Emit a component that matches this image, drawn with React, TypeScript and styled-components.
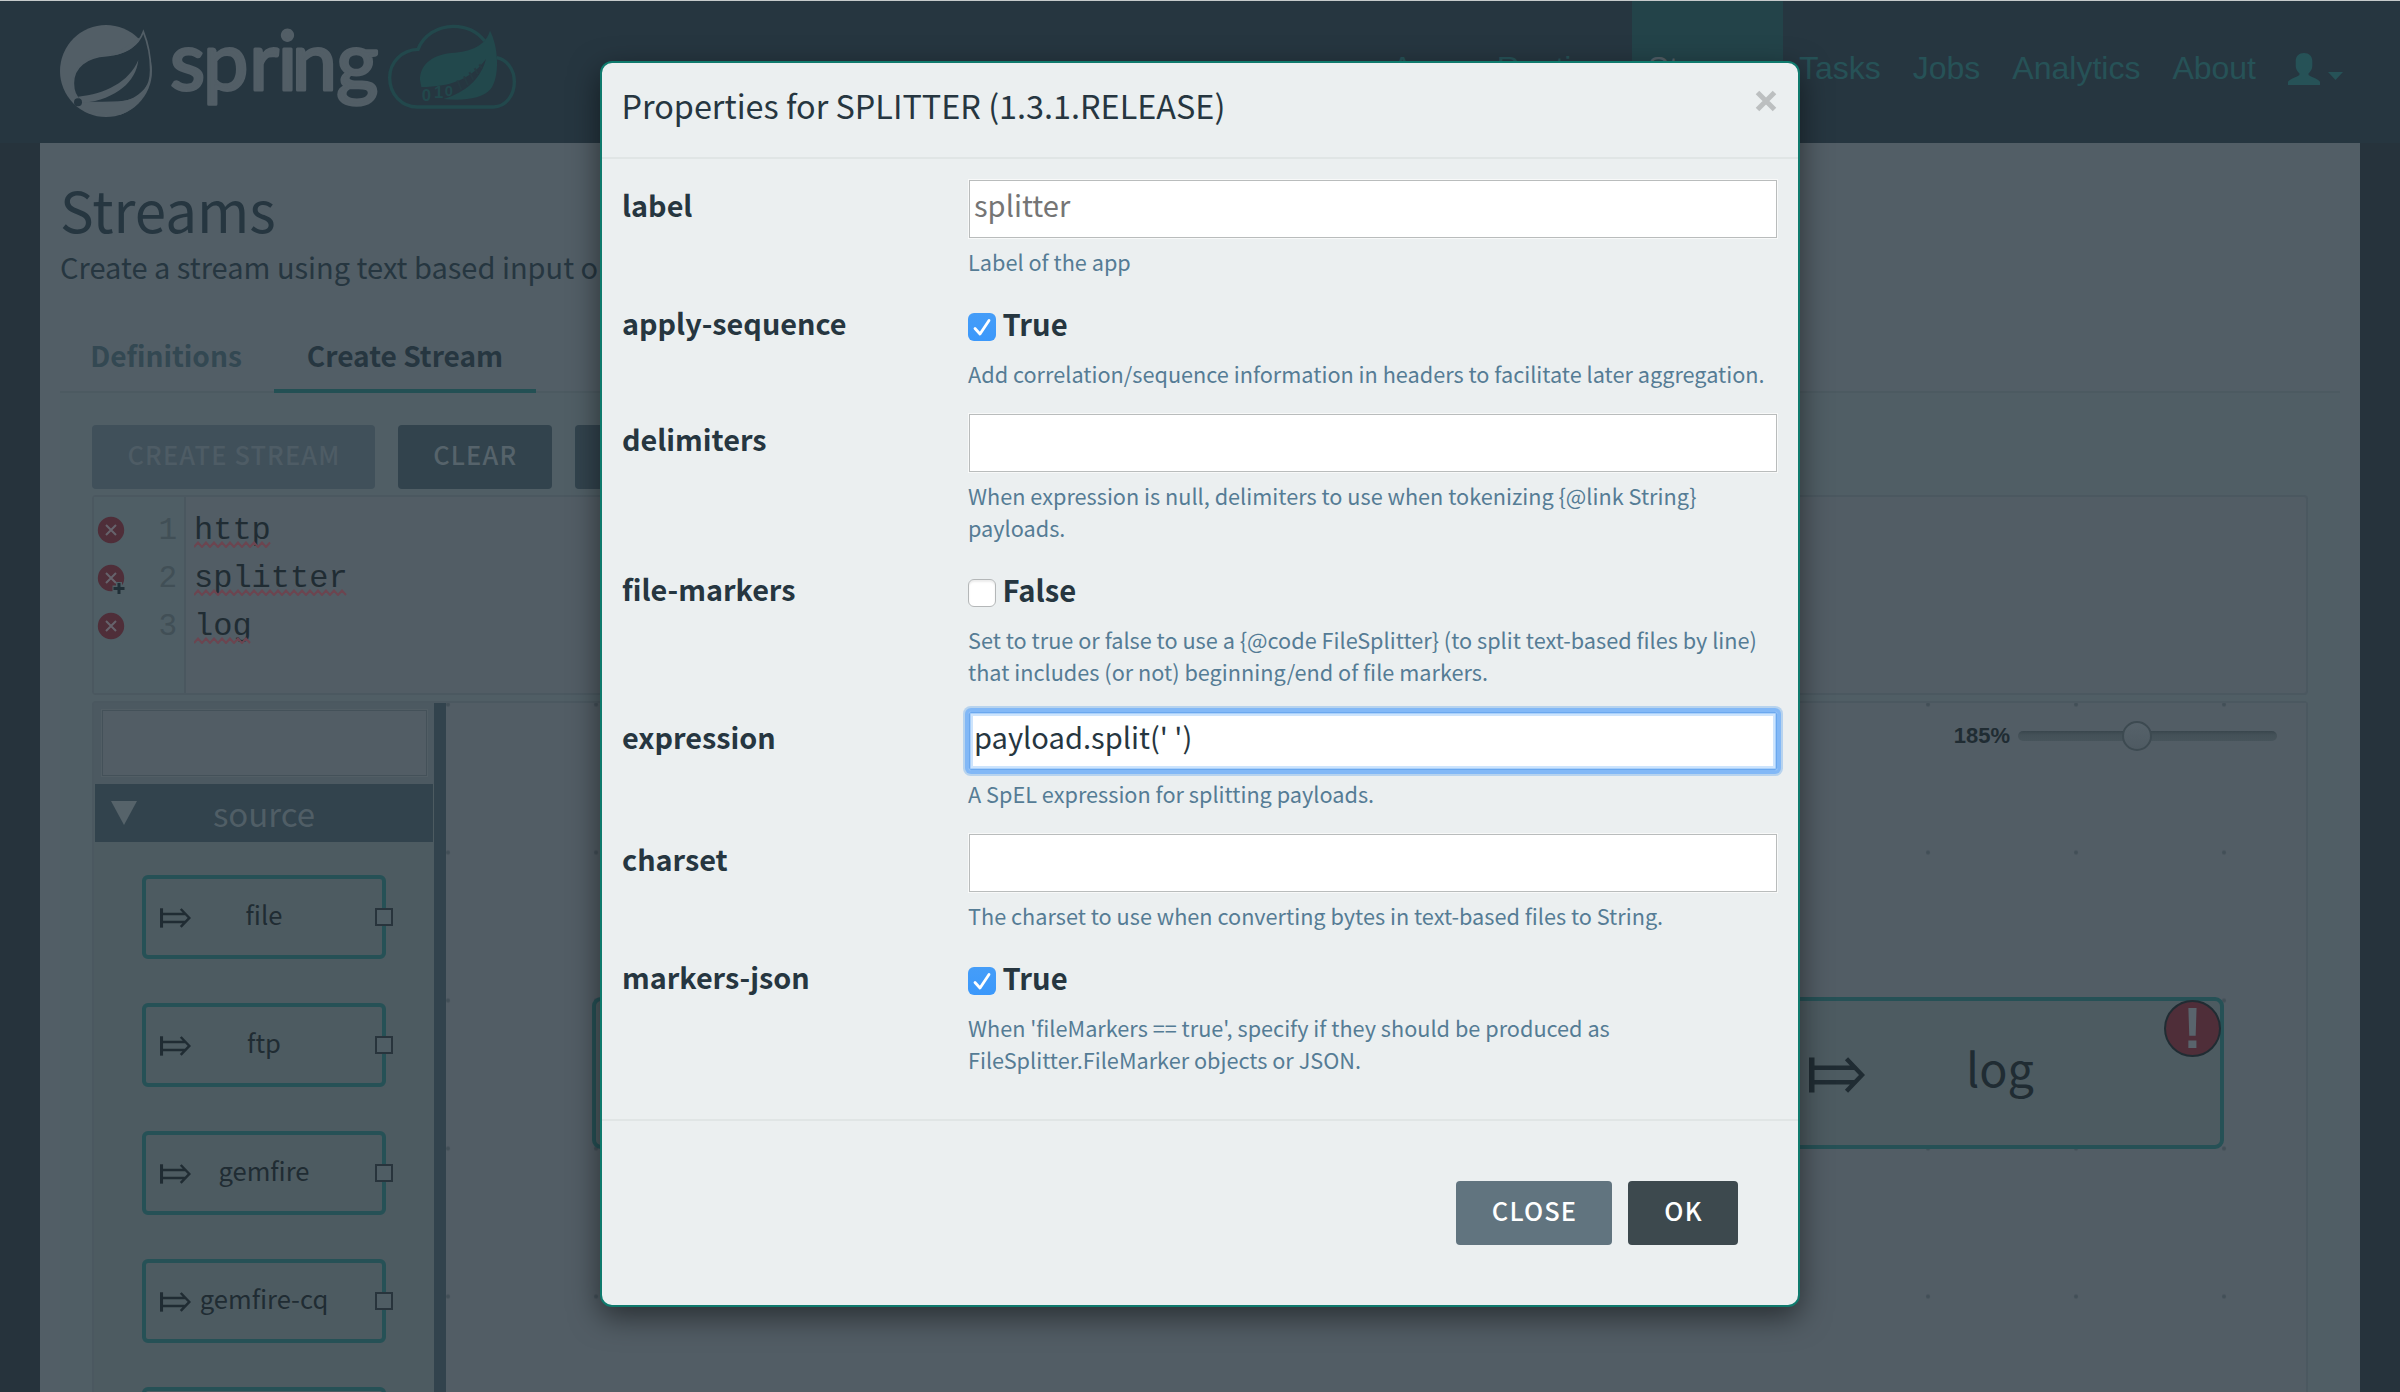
import React from 'react';
import styled, { createGlobalStyle, css } from 'styled-components';

const sans = '"Noto Sans CJK SC", "Noto Sans", sans-serif';
const helvetica = '"Liberation Sans", Arial, sans-serif';
const mono = '"Liberation Mono", monospace';

const GlobalStyle = createGlobalStyle`
  * { box-sizing: border-box; }
  body { margin: 0; background: #26333c; overflow: hidden; }
  button, input { font: inherit; margin: 0; }
`;

/* ---------- page shell ---------- */

const Page = styled.div`
  position: relative;
  display: flex;
  flex-direction: column;
  width: 2400px;
  height: 1392px;
  overflow: hidden;
  background: #26333c;
  color: #263640;
  font-family: ${sans};
`;

const Header = styled.header`
  display: flex;
  flex: none;
  justify-content: space-between;
  align-items: flex-start;
  height: 143px;
  padding: 0 41px 0 50px;
  border-top: 1px solid #c6cacb;
  background: #263640;
`;

const LogoArt = styled.svg`
  display: block;
  width: 480px;
  height: 110px;
  margin-top: 14px;
  overflow: visible;
`;

const Nav = styled.nav`
  display: flex;
  font: 32px/134px ${helvetica};
`;

const NavItem = styled.a<{ $active?: boolean }>`
  padding: 0 16px;
  color: ${(p) => (p.$active ? '#525e66' : '#265257')};
  background: ${(p) => (p.$active ? '#234349' : 'transparent')};
`;

const UserMenu = styled.a`
  display: flex;
  align-items: center;
  gap: 8px;
  height: 136px;
  padding: 0 16px;
  svg { display: block; fill: #265257; }
  svg:last-child { margin-top: 13px; }
`;

const Content = styled.main`
  display: flex;
  flex: 1;
  flex-direction: column;
  margin: 0 40px;
  padding: 30px 20px 0;
  background: #525e66;
`;

const Title = styled.h1`
  margin: 0;
  font-size: 56.5px;
  font-weight: 400;
  line-height: 70px;
`;

const Lead = styled.p`
  margin: 3px 0 0;
  font-size: 29px;
  line-height: 40px;
  white-space: nowrap;
`;

const Tabs = styled.div`
  display: flex;
  gap: 2px;
  height: 59px;
  margin-top: 48px;
  border-bottom: 2px solid #4c5a61;
`;

const Tab = styled.div<{ $active?: boolean; $width: number }>`
  width: ${(p) => p.$width}px;
  height: 59px;
  border-bottom: 4px solid ${(p) => (p.$active ? '#235054' : 'transparent')};
  color: ${(p) => (p.$active ? '#263640' : '#334852')};
  font-size: 28.1px;
  font-weight: 700;
  line-height: 41px;
  text-align: center;
`;

const TabPane = styled.section`
  display: flex;
  flex: 1;
  flex-direction: column;
  gap: 6px;
  padding: 32px 32px 0;
  background: #505e65;
`;

const Toolbar = styled.div`
  display: flex;
  gap: 22.5px;
`;

const Button = styled.button<{ $bg: string; $fg: string; $width: number }>`
  width: ${(p) => p.$width}px;
  height: 64px;
  padding: 0 0 6px 1px;
  border: 0;
  border-radius: 4px;
  background: ${(p) => p.$bg};
  color: ${(p) => p.$fg};
  font-size: 25.4px;
  font-weight: 500;
  letter-spacing: 1.15px;
  white-space: nowrap;
`;

/* ---------- text editor ---------- */

const Editor = styled.div`
  display: grid;
  grid-template-columns: 92px 1fr;
  height: 200px;
  border: 2px solid #4b5860;
  border-radius: 4px;
  background: #525d65;
  font: 32px/48px ${mono};
`;

const Gutter = styled.div`
  padding-top: 9px;
  border-right: 2px solid #4a575f;
  background: #4f5e65;
`;

const GutterRow = styled.div`
  display: flex;
  align-items: center;
  justify-content: space-between;
  height: 48px;
  padding: 0 7px 0 4px;
  color: #414f56;
  svg { display: block; overflow: visible; }
`;

const LineNumber = styled.span`
  padding-top: 2px;
  font-size: 31px;
`;

const Code = styled.div`
  padding: 10px 0 0 8px;
  color: #202c33;
`;

const CodeLine = styled.div`
  position: relative;
  width: max-content;
  height: 48px;
`;

const Squiggle = styled.svg`
  position: absolute;
  left: 0;
  top: 34px;
  height: 7px;
`;

/* ---------- designer ---------- */

const Designer = styled.div`
  display: grid;
  grid-template-columns: 340px 12px 1fr;
  flex: 1;
  border: 2px solid #4b5860;
  border-bottom: 0;
  border-radius: 4px 4px 0 0;
  background: #525d65;
`;

const Palette = styled.div`
  display: flex;
  flex-direction: column;
  padding: 0 1px;
  height: 689px;
  overflow: hidden;
  background: #4d5b61;
`;

const FilterBar = styled.div`
  flex: none;
  height: 81px;
  margin: 0 -1px;
  padding: 6px 6.5px;
  background: #4c5961;
`;

const FilterInput = styled.input`
  display: block;
  width: 327px;
  height: 68px;
  border: 1px solid #525e65;
  outline: 0;
  background: #525d65;
  box-shadow: inset 0 0 0 1px #445159;
`;

const GroupHeader = styled.div`
  display: grid;
  grid-template-columns: 1fr auto 1fr;
  align-items: center;
  flex: none;
  height: 58px;
  padding: 0 16px;
  background: #32434d;
  color: #505e66;
  font-size: 33px;
  line-height: 56px;
  svg { display: block; fill: #56636a; }
`;

const NodeList = styled.div`
  display: flex;
  flex-direction: column;
  gap: 44px;
  padding: 33px 47px 0;
`;

const PaletteNode = styled.div`
  position: relative;
  display: flex;
  flex: none;
  align-items: center;
  justify-content: center;
  height: 84px;
  padding-bottom: 6px;
  border: 4px solid #265156;
  border-radius: 6px;
  color: #202c33;
  font-size: 25.6px;
  line-height: 38px;
`;

const NodeIcon = styled.svg<{ $left: number; $top: number; $width: number }>`
  position: absolute;
  left: ${(p) => p.$left}px;
  top: ${(p) => p.$top}px;
  width: ${(p) => p.$width}px;
`;

const Port = styled.span`
  position: absolute;
  right: -11px;
  top: 29px;
  width: 18px;
  height: 18px;
  border: 2px solid #28343c;
  background: #4f5d64;
`;

const Divider = styled.div`
  background: #32434d;
`;

const Canvas = styled.div`
  position: relative;
  overflow: hidden;
  background: #525d65 radial-gradient(circle, #424f57 1.4px, transparent 2.6px) -72px -72.5px / 148px 148px;
`;

const CanvasNode = styled.div<{ $left: number }>`
  position: absolute;
  left: ${(p) => p.$left}px;
  top: 294px;
  display: flex;
  align-items: center;
  justify-content: center;
  width: 444px;
  height: 152px;
  padding: 0 4px 13px 0;
  border: 4px solid #265156;
  border-radius: 9px;
  background: #4d5b61;
  color: #202c33;
  font-size: 46.7px;
  line-height: 68px;
`;

const ErrorBadge = styled.span`
  position: absolute;
  right: -1px;
  top: -1px;
  display: flex;
  align-items: center;
  justify-content: center;
  width: 57px;
  height: 57px;
  border: 2px solid #202c33;
  border-radius: 50%;
  background: #4f2e39;
  color: #59646c;
  font: bold 57px/57px ${helvetica};
`;

const Zoom = styled.div`
  position: absolute;
  right: 29px;
  top: 18px;
  display: flex;
  align-items: center;
  gap: 8px;
  height: 30px;
  color: #202c33;
  font: bold 22px/30px ${helvetica};
`;

const Track = styled.div`
  display: flex;
  align-items: center;
  width: 259px;
  height: 10px;
  padding-left: 104px;
  border-radius: 5px;
  background: linear-gradient(#39464d, #445158 40%, #47545b);
`;

const Handle = styled.div`
  flex: none;
  width: 30px;
  height: 30px;
  border: 2px solid #3d4a51;
  border-radius: 50%;
  background: linear-gradient(#56626a, #4e5a62);
`;

/* ---------- modal ---------- */

const Modal = styled.div`
  position: absolute;
  left: 600px;
  top: 61px;
  display: flex;
  flex-direction: column;
  width: 1200px;
  height: 1246px;
  border: 2px solid #0f7a6d;
  border-radius: 12px;
  background: #ebeff0;
  box-shadow: 0 10px 30px rgba(0, 0, 0, 0.5);
`;

const ModalHeader = styled.div`
  display: flex;
  flex: none;
  justify-content: space-between;
  height: 96px;
  padding: 19px 20px 0 19.5px;
  border-bottom: 2px solid #e0e5e5;
`;

const ModalTitle = styled.h4`
  margin: 0;
  font-size: 32.4px;
  font-weight: 400;
  line-height: 46px;
  white-space: nowrap;
`;

const CloseIcon = styled.svg`
  display: block;
  width: 24px;
  height: 24px;
  margin-top: 7px;
`;

const ModalBody = styled.div`
  display: flex;
  flex: 1;
  flex-direction: column;
  gap: 20px;
  padding: 17px 18px 0 20px;
`;

const Field = styled.div`
  display: grid;
  grid-template-columns: 346px 810px;
`;

const FieldName = styled.label<{ $input?: boolean }>`
  padding-top: ${(p) => (p.$input ? 8.5 : 4.5)}px;
  font-size: 28.8px;
  font-weight: 700;
  line-height: 40px;
`;

const Control = styled.div<{ $input?: boolean }>`
  display: flex;
  flex-direction: column;
  gap: ${(p) => (p.$input ? 7 : 15.5)}px;
  padding-top: ${(p) => (p.$input ? 3 : 4.5)}px;
`;

const focused = css`
  border-color: #82b8f6;
  border-radius: 3px;
  box-shadow:
    inset 0 0 0 1px #6ba8ee,
    inset 0 0 0 2px #a9d0fb,
    inset 0 0 0 4px #cde4fc,
    0 0 0 3px #82b8f6,
    0 0 0 5px #b7d3ee;
`;

const TextInput = styled.input<{ $focus?: boolean }>`
  display: block;
  width: 810px;
  height: 60px;
  padding: 0 4px 10px 5px;
  border: 1px solid #f8f9f9;
  outline: 0;
  background: #fff;
  box-shadow: inset 0 0 0 1px #b9bcbc;
  color: #263640;
  font-size: 29.1px;
  &::placeholder { color: #757575; opacity: 1; }
  ${(p) => p.$focus && focused}
`;

const CheckLabel = styled.div`
  display: flex;
  gap: 6.5px;
  height: 40px;
  font-size: 29.2px;
  font-weight: 700;
  line-height: 40px;
`;

const CheckBox = styled.span<{ $checked: boolean }>`
  width: 28px;
  height: 28px;
  margin-top: 10.5px;
  border: ${(p) => (p.$checked ? '0' : '1px solid #b4b7b8')};
  border-radius: 6px;
  background: ${(p) => (p.$checked ? 'linear-gradient(#459df8, #3b98fb)' : '#fff')};
  box-shadow: ${(p) => (p.$checked ? 'none' : 'inset 0 2px 2px #ececec')};
  svg { display: block; }
`;

const Help = styled.p`
  margin: 0;
  color: #557c95;
  font-size: 21.7px;
  line-height: 32px;
`;

const ModalFooter = styled.div`
  display: flex;
  flex: none;
  justify-content: flex-end;
  gap: 16px;
  height: 186px;
  padding: 60px 60px 0 0;
  border-top: 2px solid #e0e5e5;
`;

/* ---------- drawings ---------- */

const Logo = () => (
  <LogoArt viewBox="0 0 1440 330">
    <circle cx="168" cy="168" r="138" fill="#525e66" />
    <path
      d="M280 50 C268 84 235 115 170 122 C110 126 70 155 70 205 C70 230 80 248 92 258 L112 262 C180 264 215 264 240 256 C285 242 302 210 302 165 C302 115 292 80 280 50 Z"
      fill="#263640" stroke="#525e66" strokeWidth="5"
    />
    <path d="M250 80 L268 68 L266 78 C250 100 225 115 190 121 Z" fill="#525e66" />
    <path d="M84 245 C165 238 238 200 265 135 C258 200 200 252 100 264 Z" fill="#525e66" />
    <path d="M100 262 C160 266 220 264 250 248 C270 238 285 222 294 205 C285 245 262 280 210 300 L120 290 Z" fill="#525e66" />
    <circle cx="84" cy="262" r="12" fill="#263640" />
    <text
      x="360 459 598 683 725 859"
      y="225"
      fontFamily="Lato, sans-serif"
      fontSize="243"
      fill="#525e66"
      stroke="#525e66"
      strokeWidth="9"
      strokeLinejoin="round"
    >
      spring
    </text>
    <path
      d="M1304 78 C1282 50 1248 34 1210 34 C1162 34 1120 62 1104 103 C1056 104 1019 142 1019 188 C1019 236 1054 276 1102 276 L1330 276 C1368 276 1393 240 1393 200 C1393 162 1370 134 1340 128"
      fill="none" stroke="#22484c" strokeWidth="10"
    />
    <path
      d="M1320 47 C1308 86 1276 106 1215 113 C1150 116 1110 146 1110 195 L1114 216 C1205 216 1265 190 1308 132 C1292 192 1248 232 1180 252 C1240 258 1296 252 1322 222 C1350 186 1346 96 1320 47 Z"
      fill="#22484c"
    />
    <g fill="#22484c" fontFamily="Liberation Sans, sans-serif" fontWeight="bold" fontSize="50">
      <text x="1115" y="258">0</text>
      <text x="1152" y="250">1</text>
      <text x="1184" y="244" fontSize="44">0</text>
    </g>
    <path d="M1222 196 l12 28 M1242 184 l12 26 M1258 172 l12 22 M1274 160 l10 18 M1288 148 l8 12" stroke="#263a42" strokeWidth="6" />
  </LogoArt>
);

const ArrowFromBar = ({ left, top, width }: { left: number; top: number; width: number }) => (
  <NodeIcon $left={left} $top={top} $width={width} viewBox="0 0 56 36">
    <rect x="0" y="0.5" width="5.5" height="35" fill="#202c33" />
    <path d="M5 10.8 H46 M5 25.2 H46 M37.5 1.8 L53 18 L37.5 34.2" fill="none" stroke="#202c33" strokeWidth="4.4" />
  </NodeIcon>
);

const ErrorIcon = ({ plus }: { plus?: boolean }) => (
  <svg width="27" height="27" viewBox="0 0 27 27">
    <circle cx="13" cy="13" r="13.2" fill="#4f2e39" />
    <path d="M8 8 L18 18 M18 8 L8 18" stroke="#66636c" strokeWidth="2" />
    {plus && (
      <>
        <path d="M21 17 V30 M14.5 23.5 H27.5" stroke="#4f5e65" strokeWidth="6" />
        <path d="M21 18 V29 M15.5 23.5 H26.5" stroke="#202f37" strokeWidth="3" />
      </>
    )}
  </svg>
);

const wave = (width: number) => {
  let d = 'M0 6';
  for (let x = 4, up = true; x <= width; x += 4, up = !up) d += ` L${x} ${up ? 1.5 : 6}`;
  return d;
};

const Line = ({ text }: { text: string }) => {
  const width = Math.round(text.length * 19.2);
  return (
    <CodeLine>
      {text}
      <Squiggle width={width} viewBox={`0 0 ${width} 7`}>
        <path d={wave(width)} fill="none" stroke="#6c4550" strokeWidth="2" />
      </Squiggle>
    </CodeLine>
  );
};

/* ---------- data ---------- */

type FieldDef = {
  name: string;
  help: string;
  checked?: boolean;
  value?: string;
  placeholder?: string;
  focus?: boolean;
};

const fields: FieldDef[] = [
  { name: 'label', placeholder: 'splitter', help: 'Label of the app' },
  { name: 'apply-sequence', checked: true, help: 'Add correlation/sequence information in headers to facilitate later aggregation.' },
  { name: 'delimiters', help: 'When expression is null, delimiters to use when tokenizing {@link String} payloads.' },
  { name: 'file-markers', checked: false, help: 'Set to true or false to use a {@code FileSplitter} (to split text-based files by line) that includes (or not) beginning/end of file markers.' },
  { name: 'expression', value: "payload.split(' ')", focus: true, help: 'A SpEL expression for splitting payloads.' },
  { name: 'charset', help: 'The charset to use when converting bytes in text-based files to String.' },
  { name: 'markers-json', checked: true, help: "When 'fileMarkers == true', specify if they should be produced as FileSplitter.FileMarker objects or JSON." },
];

const FieldRow = ({ name, help, checked, value, placeholder, focus }: FieldDef) => {
  const isInput = checked === undefined;
  return (
    <Field>
      <FieldName $input={isInput}>{name}</FieldName>
      <Control $input={isInput}>
        {isInput ? (
          <TextInput readOnly value={value ?? ''} placeholder={placeholder} $focus={focus} />
        ) : (
          <CheckLabel>
            <CheckBox $checked={!!checked}>
              {checked && (
                <svg width="28" height="28" viewBox="0 0 28 28">
                  <path d="M7 15.5 L12 21 L21 7.5" fill="none" stroke="#fff" strokeWidth="2.8" strokeLinecap="round" strokeLinejoin="round" />
                </svg>
              )}
            </CheckBox>
            {checked ? 'True' : 'False'}
          </CheckLabel>
        )}
        <Help>{help}</Help>
      </Control>
    </Field>
  );
};

export default function App() {
  return (
    <Page>
      <GlobalStyle />
      <Header>
        <Logo />
        <Nav>
          <NavItem>Apps</NavItem>
          <NavItem>Runtime</NavItem>
          <NavItem $active>Streams</NavItem>
          <NavItem>Tasks</NavItem>
          <NavItem>Jobs</NavItem>
          <NavItem>Analytics</NavItem>
          <NavItem>About</NavItem>
          <UserMenu>
            <svg width="32" height="32" viewBox="0 0 32 32">
              <path d="M16 0 C21 0 24.3 3 24.3 8 V13 C24.3 16 22.5 18.5 20.5 20.5 C20.3 22 21 22.6 23 23.4 C28 25.5 32 27.5 32 29 V32 H0 V29 C0 27.5 4 25.5 9 23.4 C11 22.6 11.7 22 11.5 20.5 C9.5 18.5 7.7 16 7.7 13 V8 C7.7 3 11 0 16 0 Z" />
            </svg>
            <svg width="15" height="8" viewBox="0 0 15 8">
              <path d="M0 0 H15 L7.5 8 Z" />
            </svg>
          </UserMenu>
        </Nav>
      </Header>

      <Content>
        <Title>Streams</Title>
        <Lead>Create a stream using text based input or</Lead>
        <Tabs>
          <Tab $width={212}>Definitions</Tab>
          <Tab $active $width={262}>Create Stream</Tab>
        </Tabs>
        <TabPane>
          <Toolbar>
            <Button $width={283} $bg="#40505a" $fg="#4e5c65">CREATE STREAM</Button>
            <Button $width={154.5} $bg="#32434d" $fg="#56636b">CLEAR</Button>
            <Button $width={160} $bg="#32434d" $fg="#56636b" />
          </Toolbar>

          <Editor>
            <Gutter>
              <GutterRow><ErrorIcon /><LineNumber>1</LineNumber></GutterRow>
              <GutterRow><ErrorIcon plus /><LineNumber>2</LineNumber></GutterRow>
              <GutterRow><ErrorIcon /><LineNumber>3</LineNumber></GutterRow>
            </Gutter>
            <Code>
              <Line text="http" />
              <Line text="splitter" />
              <Line text="log" />
            </Code>
          </Editor>

          <Designer>
            <Palette>
              <FilterBar><FilterInput readOnly /></FilterBar>
              <GroupHeader>
                <svg width="26" height="24" viewBox="0 0 26 24"><path d="M0 0 H26 L13 24 Z" /></svg>
                source
              </GroupHeader>
              <NodeList>
                {['file', 'ftp', 'gemfire', 'gemfire-cq', ''].map((name) => (
                  <PaletteNode key={name}>
                    <ArrowFromBar left={14} top={29} width={31} />
                    {name}
                    <Port />
                  </PaletteNode>
                ))}
              </NodeList>
            </Palette>
            <Divider />
            <Canvas>
              <Zoom>
                185%
                <Track><Handle /></Track>
              </Zoom>
              <CanvasNode $left={146} />
              <CanvasNode $left={1334}>
                <ArrowFromBar left={25} top={56} width={56} />
                log
                <ErrorBadge>!</ErrorBadge>
              </CanvasNode>
            </Canvas>
          </Designer>
        </TabPane>
      </Content>

      <Modal>
        <ModalHeader>
          <ModalTitle>Properties for SPLITTER (1.3.1.RELEASE)</ModalTitle>
          <CloseIcon viewBox="0 0 24 24">
            <path d="M3.5 3.5 L20.5 20.5 M20.5 3.5 L3.5 20.5" stroke="#bcbfc0" strokeWidth="5" />
          </CloseIcon>
        </ModalHeader>
        <ModalBody>
          {fields.map((f) => <FieldRow key={f.name} {...f} />)}
        </ModalBody>
        <ModalFooter>
          <Button $width={156} $bg="#61747f" $fg="#fff">CLOSE</Button>
          <Button $width={110} $bg="#3d494e" $fg="#fff">OK</Button>
        </ModalFooter>
      </Modal>
    </Page>
  );
}
